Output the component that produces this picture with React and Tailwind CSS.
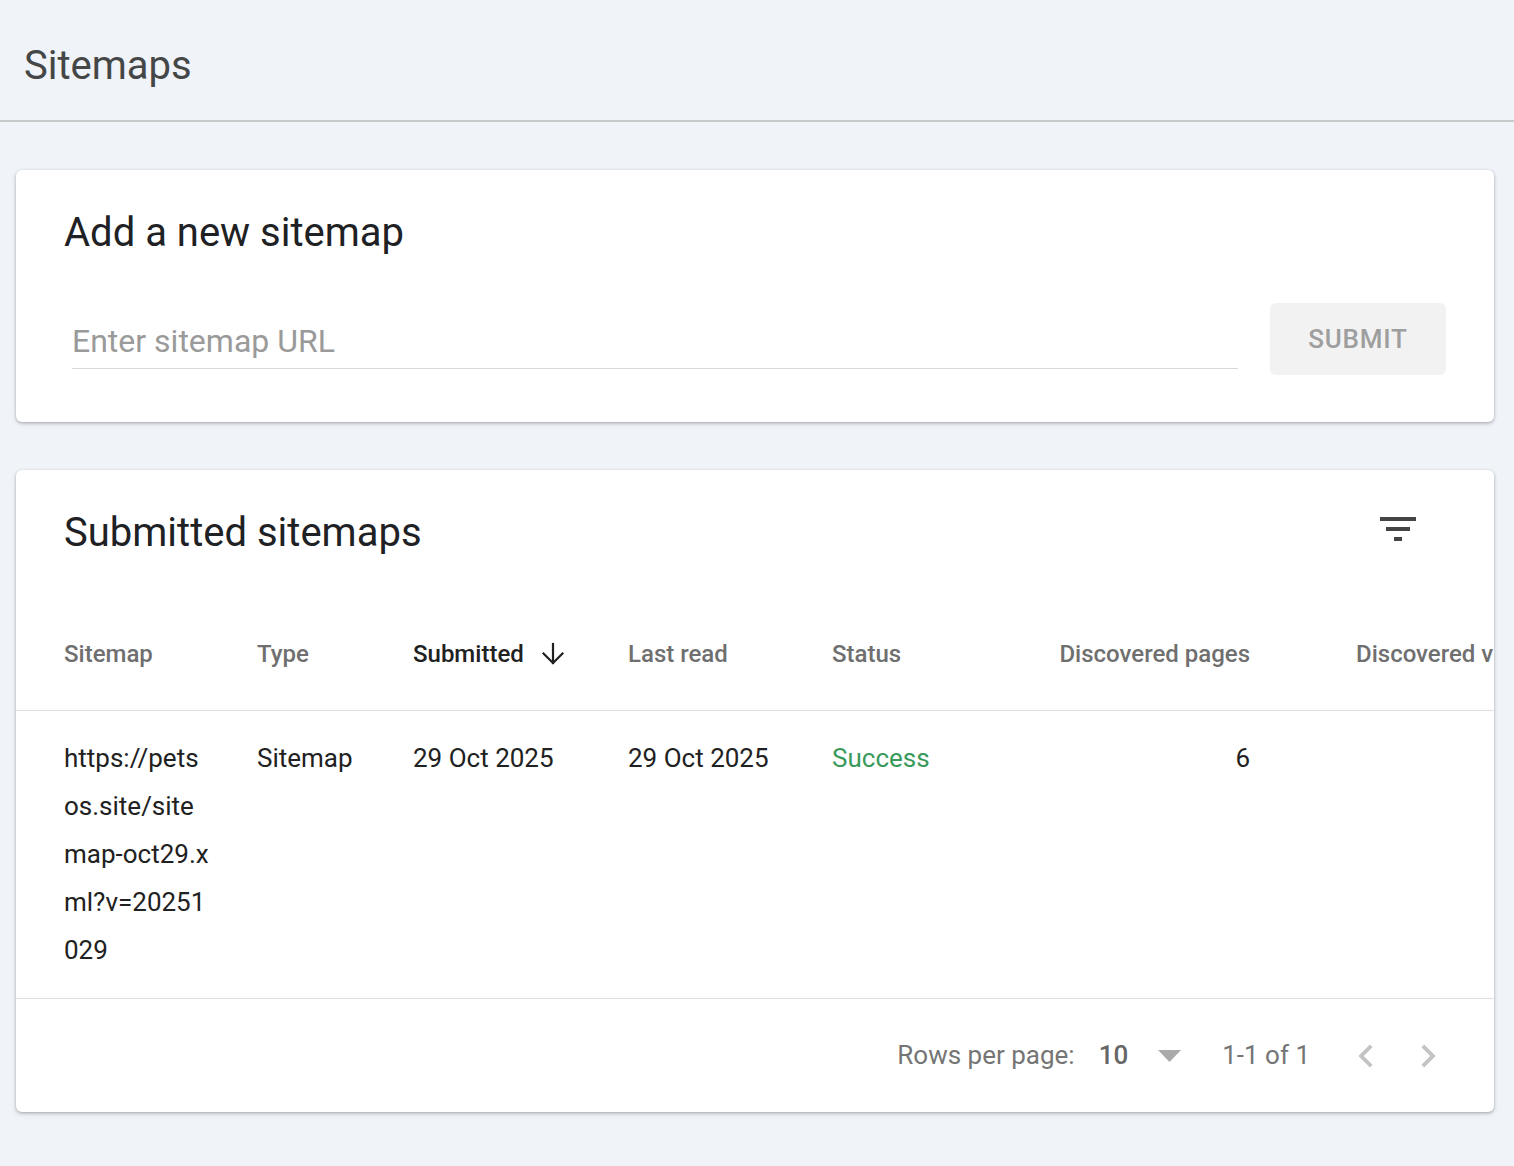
import { useState } from "react";

const font = { fontFamily: "Roboto, 'Liberation Sans', sans-serif" };

function FilterIcon() {
  return (
    <svg width="48" height="48" viewBox="0 0 24 24" fill="#444">
      <path d="M10 18h4v-2h-4v2zM3 6v2h18V6H3zm3 7h12v-2H6v2z" />
    </svg>
  );
}

function SortArrow() {
  return (
    <svg width="24" height="24" viewBox="0 0 24 24" fill="none" stroke="#212121" strokeWidth="2.2" strokeLinecap="square">
      <path d="M12 2v19" />
      <path d="M2.5 11.5 12 21l9.5-9.5" />
    </svg>
  );
}

function ChevronLeft() {
  return (
    <svg width="46" height="46" viewBox="0 0 24 24" fill="#c4c4c4">
      <path d="M15.41 7.41L14 6l-6 6 6 6 1.41-1.41L10.83 12z" />
    </svg>
  );
}

function ChevronRight() {
  return (
    <svg width="46" height="46" viewBox="0 0 24 24" fill="#c4c4c4">
      <path d="M10 6L8.59 7.41 13.17 12l-4.58 4.59L10 18l6-6z" />
    </svg>
  );
}

const rows = [
  {
    url: "https://petsos.site/sitemap-oct29.xml?v=20251029",
    type: "Sitemap",
    submitted: "29 Oct 2025",
    lastRead: "29 Oct 2025",
    status: "Success",
    pages: "6",
  },
];

export default function App() {
  const [url, setUrl] = useState("");

  return (
    <div className="min-h-[1166px] bg-[#f0f3f8]" style={font}>
      <header className="flex h-[122px] items-center border-b-2 border-[#c8c9cb] pl-6 pt-3">
        <h1 className="text-[40px] leading-[48px] text-[#444746]">Sitemaps</h1>
      </header>

      <div className="flex flex-col gap-12 pl-4 pr-5 pt-12 pb-12">
        {/* add sitemap */}
        <section className="rounded-md bg-white px-12 pt-[39px] pb-[47px] shadow-[0_1px_3px_rgba(60,64,67,0.35),0_2px_5px_rgba(60,64,67,0.12)]">
          <h2 className="text-[40px] leading-[48px] text-[#202124]">Add a new sitemap</h2>
          <div className="mt-[46px] flex h-[72px]">
            <div className="ml-2 mr-8 flex-1 self-start border-b border-[#d9d9d9] pt-[18px] pb-[7px]">
              <input
                value={url}
                onChange={(e) => setUrl(e.target.value)}
                placeholder="Enter sitemap URL"
                className="h-10 w-full bg-transparent text-[32px] text-[#202124] outline-none placeholder:text-[#9a9a9a]"
              />
            </div>
            <button
              type="button"
              disabled={!url.trim()}
              className="flex h-[72px] w-[176px] items-center justify-center rounded-md bg-[#f2f2f2] text-[26px] font-medium tracking-[0.8px] text-[#9e9e9e]"
            >
              SUBMIT
            </button>
          </div>
        </section>

        {/* submitted sitemaps */}
        <section className="overflow-hidden rounded-md bg-white shadow-[0_1px_3px_rgba(60,64,67,0.35),0_2px_5px_rgba(60,64,67,0.12)]">
          <div className="flex items-center justify-between pl-12 pr-[72px] pt-[39px]">
            <h2 className="text-[40px] leading-[48px] text-[#202124]">Submitted sitemaps</h2>
            <button type="button" className="-mt-2" aria-label="Filter">
              <FilterIcon />
            </button>
          </div>

          <div className="mt-[41px] flex h-[113px] items-center border-b border-[#e0e0e0] pl-12 text-[24px] font-medium whitespace-nowrap text-[#6f6f6f]">
            <div className="w-[193px] shrink-0">Sitemap</div>
            <div className="w-[156px] shrink-0">Type</div>
            <div className="flex w-[215px] shrink-0 items-center gap-[17px] text-[#212121]">
              Submitted
              <SortArrow />
            </div>
            <div className="w-[204px] shrink-0">Last read</div>
            <div className="w-[200px] shrink-0">Status</div>
            <div className="w-[218px] shrink-0 text-right">Discovered pages</div>
            <div className="ml-[106px] shrink-0">Discovered videos</div>
          </div>

          {rows.map((r) => (
            <div key={r.url} className="flex border-b border-[#e0e0e0] pt-[23px] pb-6 pl-12 text-[26px] leading-[48px] text-[#212121]">
              <div className="w-[193px] shrink-0">
                <div className="w-[147px] break-all">{r.url}</div>
              </div>
              <div className="w-[156px] shrink-0">{r.type}</div>
              <div className="w-[215px] shrink-0">{r.submitted}</div>
              <div className="w-[204px] shrink-0">{r.lastRead}</div>
              <div className="w-[200px] shrink-0 text-[#3a9a5b]">{r.status}</div>
              <div className="w-[218px] shrink-0 text-right">{r.pages}</div>
            </div>
          ))}

          <div className="flex h-[113px] items-center justify-end pr-[43px] text-[26px] text-[#757575]">
            <span>Rows per page:</span>
            <span className="ml-[24px] font-medium text-[#666]">10</span>
            <svg className="ml-[30px]" width="23" height="12" viewBox="0 0 23 12" fill="#aaa">
              <path d="M0 0h23L11.5 12z" />
            </svg>
            <span className="ml-[41px]">1-1 of 1</span>
            <div className="ml-[33px] flex items-center gap-4">
              <ChevronLeft />
              <ChevronRight />
            </div>
          </div>
        </section>
      </div>
    </div>
  );
}
